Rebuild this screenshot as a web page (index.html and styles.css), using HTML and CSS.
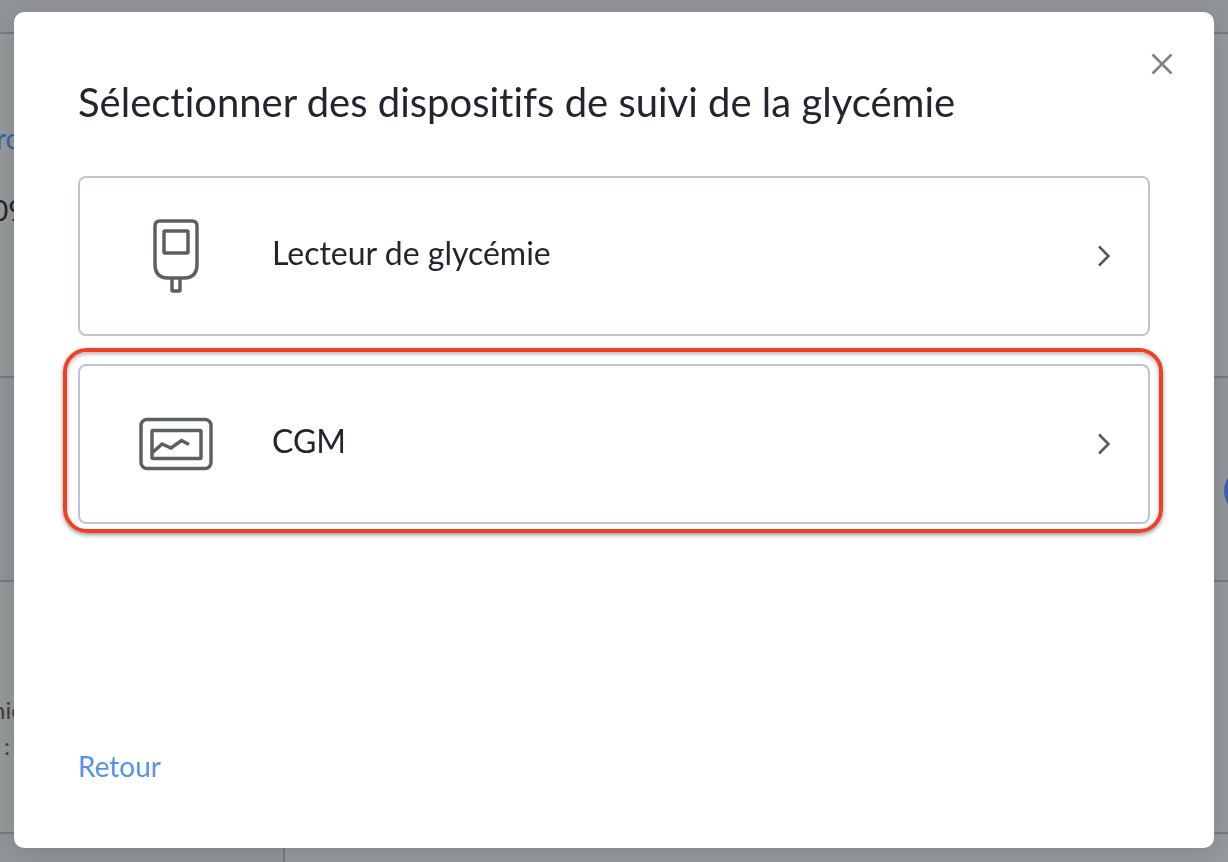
FILE: index.html
```html
<!DOCTYPE html>
<html lang="fr">
<head>
    <meta charset="UTF-8">
    <meta name="viewport" content="width=device-width, initial-scale=1.0">
    <title>Sélectionner des dispositifs</title>
    <link rel="stylesheet" href="styles.css">
</head>
<body>

    <div class="page" aria-hidden="true">
        <div class="page-bar"></div>
        <div class="page-profile">
            <span class="page-link">ro</span>
            <span class="page-date">09</span>
        </div>
        <div class="page-band">
            <span class="page-dot"></span>
        </div>
        <div class="page-info">
            <span>nie</span>
            <span class="page-colon">:</span>
        </div>
        <div class="page-footer">
            <div class="page-side"></div>
            <div class="page-main"></div>
        </div>
    </div>

    <div class="overlay">
        <div class="modal" role="dialog" aria-modal="true" aria-labelledby="modalTitle">
            <button type="button" class="close" aria-label="Fermer">
                <svg width="24" height="24" viewBox="0 0 24 24">
                    <path d="M2.5 2.5L21.5 21.5M21.5 2.5L2.5 21.5"/>
                </svg>
            </button>

            <h2 id="modalTitle">Sélectionner des dispositifs de suivi de la glycémie</h2>

            <div class="devices">
                <button type="button" class="device">
                    <svg class="device-icon" width="80" height="80" viewBox="0 0 80 80">
                        <path d="M24 5H56Q61 5 61 10V48Q61 62 48 62H32Q19 62 19 48V10Q19 5 24 5Z"/>
                        <rect x="28" y="15" width="24" height="22" rx="1"/>
                        <path d="M36 62V74Q36 75 37 75H43Q44 75 44 74V62"/>
                    </svg>
                    <span class="device-name">Lecteur de glycémie</span>
                    <svg class="chevron" width="16" height="24" viewBox="0 0 16 24">
                        <path d="M3 2.500L12.500 12L3 21.500"/>
                    </svg>
                </button>

                <button type="button" class="device selected">
                    <svg class="device-icon" width="80" height="80" viewBox="0 0 80 80">
                        <rect x="5" y="15.500" width="70" height="49" rx="6"/>
                        <rect x="16" y="26.500" width="49" height="28" rx="1"/>
                        <path d="M16 49L26 40L35 44L45.500 36.500L53 40.500"/>
                    </svg>
                    <span class="device-name">CGM</span>
                    <svg class="chevron" width="16" height="24" viewBox="0 0 16 24">
                        <path d="M3 2.500L12.500 12L3 21.500"/>
                    </svg>
                </button>
            </div>

            <a href="#" class="back">Retour</a>
        </div>
    </div>

</body>
</html>
```
FILE: styles.css
```css
* {
    box-sizing: border-box;
}

body {
    margin: 0;
    font-family: Lato, sans-serif;
    font-variant-ligatures: none;
    color: #22252e;
}

/* dimmed page behind the dialog */
.page {
    display: flex;
    flex-direction: column;
    height: 100vh;
    overflow: hidden;
    background-color: #96999b;
    color: #3b4043;
    font-size: 24px;
    line-height: 36px;
}

.page-bar {
    height: 34px;
    background-color: #919499;
    border-bottom: 2px solid #737b85;
}

.page-profile {
    display: flex;
    flex-direction: column;
    gap: 36px;
    height: 344px;
    padding-top: 86px;
    border-bottom: 2px solid #737b85;
    font-size: 28px;
}

.page-link {
    margin-left: -4px;
    color: #3a64a5;
}

.page-date {
    margin-left: -8px;
    color: #22252a;
}

.page-band {
    display: flex;
    justify-content: flex-end;
    align-items: center;
    height: 204px;
    padding-top: 24px;
    background-color: #919499;
    border-bottom: 2px solid #737b85;
}

.page-dot {
    width: 48px;
    height: 48px;
    margin-right: -44px;
    border-radius: 50%;
    background-color: #3a64a5;
}

.page-info {
    display: flex;
    flex-direction: column;
    height: 252px;
    padding-top: 110px;
    border-bottom: 2px solid #737b85;
}

.page-info span {
    margin-left: -8px;
}

.page-info .page-colon {
    margin-left: 4px;
}

.page-footer {
    display: flex;
    flex: 1;
}

.page-side {
    width: 285px;
    background-color: #919499;
    border-right: 2px solid #737b85;
}

.page-main {
    flex: 1;
}

.overlay {
    position: fixed;
    inset: 0;
    display: flex;
    padding: 12px 14px 14px;
}

.modal {
    position: relative;
    flex: 1;
    display: flex;
    flex-direction: column;
    padding: 64px;
    background-color: #fff;
    border-radius: 10px;
    box-shadow: 0 4px 24px rgba(0, 0, 0, 0.12);
}

.modal h2 {
    margin: 0 0 48px;
    font-size: 40px;
    font-weight: 400;
    line-height: 52px;
}

.close {
    position: absolute;
    top: 32px;
    right: 32px;
    display: flex;
    padding: 8px;
    border: none;
    background: none;
    cursor: pointer;
}

.close svg {
    fill: none;
    stroke: #808184;
    stroke-width: 2.5;
}

.devices {
    display: flex;
    flex-direction: column;
    gap: 28px;
}

.device {
    position: relative;
    display: flex;
    align-items: center;
    gap: 56px;
    height: 160px;
    padding: 0 36px 0 56px;
    border: 2px solid #c0c4d2;
    border-radius: 8px;
    background-color: #fff;
    color: inherit;
    font-family: inherit;
    font-size: 32px;
    text-align: left;
    cursor: pointer;
}

.device svg {
    flex: none;
    fill: none;
}

.device-icon {
    stroke: #596165;
    stroke-width: 3.5;
}

.device-name {
    flex: 1;
    padding-bottom: 8px;
}

.chevron {
    stroke: #55575b;
    stroke-width: 2.5;
}

.selected::after {
    content: "";
    position: absolute;
    inset: -18px -15px -11px -17px;
    border: 4px solid #ed4024;
    border-radius: 24px;
    box-shadow: 0 2px 4px rgba(0, 0, 0, 0.4), inset 0 2px 4px rgba(0, 0, 0, 0.3);
}

.back {
    align-self: flex-start;
    margin-top: auto;
    color: #5592ee;
    font-size: 28px;
    line-height: 36px;
    text-decoration: none;
}

.back:hover {
    text-decoration: underline;
}
```
